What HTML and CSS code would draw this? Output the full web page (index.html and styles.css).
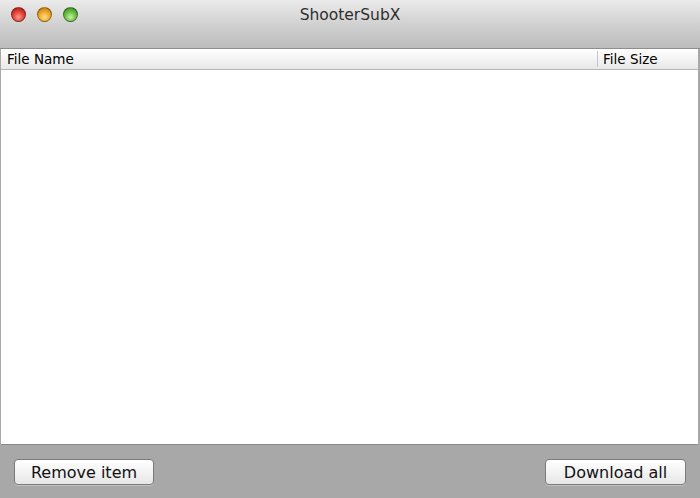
FILE: index.html
```html
<!DOCTYPE html>
<html>
<head>
<meta charset="utf-8">
<link rel="stylesheet" href="styles.css">
</head>
<body>
<div class="window">
  <div class="titlebar">
    <div class="lights">
      <span class="light red"></span>
      <span class="light yellow"></span>
      <span class="light green"></span>
    </div>
    <div class="title">ShooterSubX</div>
  </div>
  <div class="table">
    <div class="thead">
      <div class="th name">File Name</div>
      <div class="th size">File Size</div>
    </div>
    <div class="tbody"></div>
  </div>
  <div class="bottombar">
    <button class="btn">Remove item</button>
    <button class="btn">Download all</button>
  </div>
</div>
</body>
</html>
```

FILE: styles.css
```css
* { box-sizing: border-box; }
html, body { margin: 0; padding: 0; }
body {
  width: 700px;
  height: 498px;
  overflow: hidden;
  font-family: "DejaVu Sans", "Liberation Sans", sans-serif;
  background: #a9a9a9;
}
.window {
  display: flex;
  flex-direction: column;
  width: 700px;
  height: 498px;
  background: #a8a8a8;
}
.titlebar {
  position: relative;
  height: 49px;
  flex: none;
  background: linear-gradient(#ebebeb, #d6d6d6 40%, #bcbcbc);
  border-bottom: 1px solid #8e8e8e;
}
.lights {
  display: flex;
  gap: 11px;
  padding: 7px 0 0 11px;
}
.light {
  width: 15px;
  height: 15px;
  border-radius: 50%;
  border: 1px solid rgba(0,0,0,0.35);
}
.red { background: radial-gradient(circle at 50% 70%, #ff9b8f, #e5463b 45%, #a5140e 100%); }
.yellow { background: radial-gradient(circle at 50% 70%, #ffe08a, #f2a930 45%, #b3720a 100%); }
.green { background: radial-gradient(circle at 50% 70%, #c7f29a, #6fc349 45%, #2f7d17 100%); }
.title {
  position: absolute;
  left: 0;
  right: 0;
  top: 6px;
  text-align: center;
  font-size: 15.5px;
  color: #2e2e2e;
}
.table {
  flex: none;
  height: 396px;
  margin: 0 2px 0 1px;
  background: #fff;
  display: flex;
  flex-direction: column;
  border-bottom: 1px solid #8a8a8a;
}
.thead {
  display: flex;
  height: 21px;
  flex: none;
  background: linear-gradient(#ffffff, #f4f4f4 50%, #e8e8e8);
  border-bottom: 1px solid #b5b5b5;
  font-size: 13.5px;
  color: #000;
}
.th {
  display: flex;
  align-items: center;
  padding-left: 6px;
}
.name { flex: 1; }
.size {
  width: 101px;
  margin: 2px 0;
  border-left: 1px solid #c4c4c4;
  padding-left: 5px;
}
.tbody { flex: 1; }
.bottombar {
  flex: 1;
  display: flex;
  justify-content: space-between;
  align-items: flex-start;
  padding: 14px 14px 0 14px;
  background: #a8a8a8;
}
.btn {
  height: 26px;
  width: 140px;
  font-family: "DejaVu Sans", "Liberation Sans", sans-serif;
  font-size: 16px;
  color: #111;
  background: linear-gradient(#ffffff, #f3f3f3 50%, #e6e6e6);
  border: 1px solid #7b7b7b;
  border-radius: 4px;
  padding: 0;
  box-shadow: 0 1px 0 rgba(255,255,255,0.3);
}
.btn + .btn { width: 141px; }
```
